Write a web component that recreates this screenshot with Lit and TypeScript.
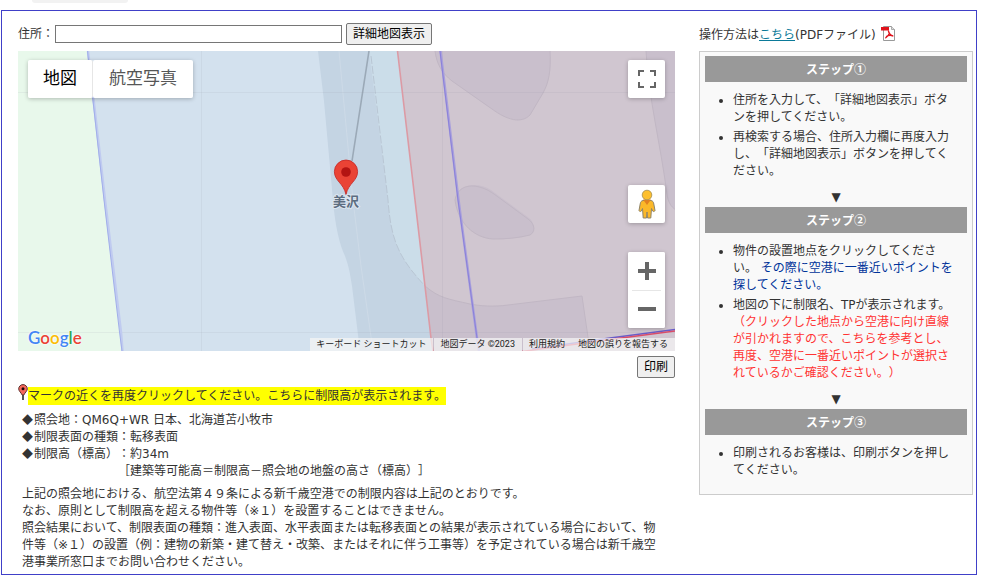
import { LitElement, html, css, svg } from "lit";
import { customElement } from "lit/decorators.js";

const fullscreenIcon = svg`<svg class="icon" viewBox="0 0 18 18" width="18" height="18" aria-hidden="true">
  <path fill="#666" d="M0 0h6v2H2v4H0zM12 0h6v6h-2V2h-4zM0 12h2v4h4v2H0zM16 12h2v6h-6v-2h4z"/></svg>`;

const pegmanIcon = svg`<svg class="icon" viewBox="0 0 18 30" width="18" height="30" aria-hidden="true">
  <path fill="#fbb829" stroke="#8f8468" stroke-width="1" d="M5 11.500C3 12 2.500 13 2.200 15L1 21.500c.4 1.200 1.700 1.200 2.300.6l1.200-2.600.7 9.500h3.300l.5-6 .5 6h3.300l.7-9.500 1.200 2.600c.6.6 1.900.6 2.300-.6L15.800 15c-.3-2-.8-3-2.800-3.500z"/>
  <path fill="#e28020" d="M5 10.500h8L9 16z"/>
  <circle cx="9" cy="6" r="4.800" fill="#fdbf2d" stroke="#a08c50" stroke-width=".8"/></svg>`;

const plusIcon = svg`<svg class="icon" viewBox="0 0 18 18" width="18" height="18" aria-hidden="true">
  <path fill="#666" d="M7 0h4v7h7v4h-7v7H7v-7H0V7h7z"/></svg>`;

const minusIcon = svg`<svg class="icon" viewBox="0 0 18 18" width="18" height="18" aria-hidden="true">
  <path fill="#666" d="M0 7h18v4H0z"/></svg>`;

const pdfIcon = svg`<svg class="pdf" viewBox="0 0 15 16" width="15" height="16" aria-hidden="true">
  <path fill="#fff" stroke="#999" d="M2.500 1.500h8l3 3v11h-11z"/>
  <path fill="#ddd" stroke="#999" stroke-width=".8" d="M10.500 1.500v3h3"/>
  <path fill="#e0131c" d="M0 2h8v3.500H0z"/>
  <path fill="none" stroke="#e0131c" stroke-width="1.300" d="M7.300 5.500c.6 3 2.200 5.300 5 5.500M8.300 8.200c-.6 2.400-2 4-4 5M5 11.800c2-1.500 4.500-1.600 7-.9"/></svg>`;

const smallPin = svg`<svg class="small-pin" viewBox="0 0 10 17" width="10" height="17" aria-hidden="true">
  <path fill="#555" d="M4 8h2v8H4z"/>
  <path fill="#f5675c" stroke="#5a3330" d="M5 .6a4.300 4.300 0 0 0-4.300 4.300C.7 7 3 8.500 4.200 11h1.600C7 8.500 9.300 7 9.300 4.900A4.300 4.300 0 0 0 5 .6z"/>
  <circle cx="5" cy="4.700" r="1.500" fill="#1c0806"/></svg>`;

const mapArt = svg`<svg class="art" viewBox="0 0 657 300" preserveAspectRatio="xMidYMid slice" role="img" aria-label="美沢">
  <rect width="657" height="300" fill="#e8f8eb"/>
  <path fill="#d3e1ee" d="M69 0 86 149 102 281 104 300H657V0z"/>
  <path fill="#c4d4e3" d="M300 0 306 50 315 149C317 175 322 195 327 205 331 216 332 222 334 235L342 300H420L380 0z"/>
  <path fill="#cbdde9" d="M351 0 370 149C373 190 381 207 407 235L397 149 380 0z"/>
  <path fill="#d0c6d0" d="M380 0 397 149 413 287 415 300H657V0z"/>
  <path fill="#c9bfcc" d="M407 235C421 247 430 248 452 253 462 255 476 256 490 254L564 245 572 300H415L413 287z"/>
  <g fill="#c9bfcc" stroke="#c1b7c4">
    <path d="M417 0C419 14 424 22 434 30L472 57 490 64C500 71 507 69 512 64L525 42C531 31 533 20 532 0" stroke="none"/>
    <path d="M417 0C419 14 424 22 434 30L474 58C489 69 503 73 512 64L525 42C531 31 533 20 532 0"/>
    <path d="M437 149C440 133 459 130 473 139L511 167C518 172 516 181 509 184L487 188C462 190 445 179 437 149z" stroke="none"/>
    <path d="M437 149C440 132 459 131 476 143L510 168C518 174 517 181 512 184 500 187 489 188 475 188 457 187 440 173 437 149z"/>
    <path d="M628 0C631 50 642 90 649 143 650 151 653 156 658 159V0"/>
  </g>
  <g fill="none">
    <path stroke="#b9c6d4" stroke-dasharray="8 2" d="M353 5 370 149C373 190 381 207 407 235"/>
    <path stroke="#c1b7c4" d="M407 235C421 247 430 248 452 253 462 255 476 256 490 254L564 245 572 300"/>
    <path stroke="#cddae7" d="M321 0 335 149 343 215 355 300"/>
    <path stroke="#9ba9b7" stroke-width="1.600" d="M351 0 334 110"/>
    <path stroke="#8a8aa0" stroke-opacity=".1" d="M183.500 0V300M424.500 0V300M0 41.500H657M0 281.500H657"/>
    <path stroke="#c0cbf0" stroke-width="2.500" d="M70 0 87 149 103 281 104.500 300"/>
    <path stroke="#a1aeea" d="M69.500 0 86 149 101.500 281 104 300"/>
    <path stroke="#dc9aa4" stroke-width="1.600" d="M379.500 0 397 149 413 287 415 300"/>
    <path stroke="#a9a0dc" stroke-width="2.500" d="M422.500 0 440.500 149 459 287 461 300"/>
    <path stroke="#8a80da" d="M422 0 440 149 459 287"/>
    <path stroke="#6a5cc8" stroke-width="1.500" d="M514 298 592 287 657 278.500"/>
    <path stroke="#da4d69" stroke-width="1.500" d="M504 300.500 592 288.500 657 280"/>
  </g>
  <path fill="#ea4335" stroke="#c5221f" stroke-width=".8" d="M328 109a11.600 11.600 0 0 0-11.600 11.600C316.400 130 325.500 132 328 143.500 330.500 132 339.600 130 339.600 120.600A11.600 11.600 0 0 0 328 109z"/>
  <circle cx="328" cy="121" r="4.800" fill="#b31412"/>
  <text class="place" x="328" y="155" text-anchor="middle">美沢</text>
</svg>`;

@customElement("app-root")
export class AppRoot extends LitElement {
  static styles = css`
    :host {
      display: block;
      overflow: hidden;
      background: #fff;
      color: #333;
      font-family: "DejaVu Sans", "Noto Sans CJK JP", sans-serif;
      font-size: 12px;
      line-height: 17px;
      text-spacing-trim: space-all;
    }
    * { box-sizing: border-box; }
    .tab {
      width: 96px;
      height: 3px;
      margin-left: 32px;
      background: #f2f2f2;
      border-radius: 0 0 16px 16px;
    }
    .frame {
      display: grid;
      grid-template-columns: minmax(0, 1fr) 274px;
      gap: 24px;
      align-items: start;
      margin: 7px 4px 8px 1px;
      padding: 12px 3px 3px 16px;
      border: 1px solid #4040c8;
    }
    .search { display: flex; align-items: center; height: 22px; margin-bottom: 6px; }
    .search label { width: 37px; white-space: nowrap; }
    .search input {
      width: 287px;
      height: 18px;
      padding: 0 2px;
      border: 1px solid #767676;
      font: inherit;
      margin-right: 4px;
    }
    .push {
      height: 22px;
      padding: 0 6px;
      border: 1px solid #767676;
      border-radius: 2px;
      background: #efefef;
      color: #000;
      font: inherit;
      line-height: 20px;
      white-space: nowrap;
    }
    .map { position: relative; height: 300px; overflow: hidden; font-family: Roboto, "Noto Sans CJK JP", sans-serif; }
    .art { display: block; width: 100%; height: 100%; }
    .place { font-size: 13px; font-weight: 700; fill: #5c6d80; stroke: #dce6f0; stroke-width: 2px; paint-order: stroke; }
    .map button { border: 0; margin: 0; padding: 0; background: #fff; font-family: inherit; }
    .types, .tools { position: absolute; top: 9px; }
    .types { left: 10px; display: flex; height: 38px; border-radius: 2px; box-shadow: 0 1px 4px rgba(0, 0, 0, .25); }
    .map .types button { padding: 0 16px 2px; font-size: 17px; line-height: 34px; color: #565656; border-radius: 2px; }
    .map .types button.on { color: #000; padding: 0 15px 2px; border-right: 1px solid #e6e6e6; }
    .tools { right: 10px; bottom: 23px; width: 37px; display: flex; flex-direction: column; }
    .tools button { display: grid; place-items: center; width: 37px; height: 38px; border-radius: 2px; }
    .tools > button, .zoom { box-shadow: 0 1px 4px rgba(0, 0, 0, .25); }
    .map .tools .peg { margin-top: auto; margin-bottom: 29px; }
    .zoom { background: #fff; border-radius: 2px; }
    .zoom hr { position: relative; margin: 0 4px -1px; border: 0; height: 1px; background: #e6e6e6; }
    .icon { display: block; }
    .logo {
      position: absolute;
      left: 10px;
      bottom: 2px;
      font: 600 17px/22px Lato, sans-serif;
      text-decoration: none;
      text-shadow: 0 0 2px #fff, 0 0 2px #fff;
    }
    .b { color: #4285f4; }
    .r { color: #ea4335; }
    .y { color: #fbbc05; }
    .g { color: #34a853; }
    .credits {
      position: absolute;
      right: 0;
      bottom: 0;
      display: flex;
      gap: 1px;
      height: 13px;
      color: #222;
      white-space: nowrap;
    }
    .credits > *, .map .credits > button {
      padding: 0 7px 0 6px;
      background: rgba(245, 245, 245, .72);
      color: inherit;
      font-size: 9px;
      line-height: 13px;
      text-decoration: none;
    }
    .credits > :last-child { margin-left: -1px; }
    .print { display: flex; justify-content: flex-end; margin-top: 5px; }
    .notice { display: flex; align-items: flex-start; height: 21px; margin-top: 6px; }
    .notice mark { margin-top: 3px; background: #ff0; color: inherit; line-height: 18px; }
    .small-pin { flex: none; }
    .result { margin: 7px 8px 0 4px; }
    .result p { margin: 0; }
    .sym { font-family: "Noto Sans CJK JP", sans-serif; font-size: 11px; line-height: 11px; padding-right: 1px; }
    .result .formula { padding-left: 96px; }
    .result .body { margin-top: 6px; }
    .howto { display: flex; align-items: center; height: 22px; margin: 1px 0 5px; }
    .howto a { color: #0b7a99; }
    .pdf { margin: 0 0 5px 5px; }
    .steps { border: 1px solid #ccc; background: #f9f9f9; padding: 4px 5px 8px; }
    h2 {
      margin: 0;
      background: #999;
      color: #fff;
      font: 700 12px/26px "Noto Sans CJK JP", sans-serif;
      text-align: center;
    }
    ul { margin: 10px 0 7px; padding: 0 12px 0 28px; }
    li + li { margin-top: 3px; }
    .next { margin: 0; text-align: center; line-height: 20px; }
    .blue { color: #039; }
    .red { color: #f33; }
  `;

  render() {
    return html`
      <div class="tab"></div>
      <div class="frame">
        <main>
          <div class="search">
            <label for="addr">住所：</label><input id="addr" type="text" />
            <button class="push" type="button">詳細地図表示</button>
          </div>
          <div class="map">
            ${mapArt}
            <div class="types">
              <button class="on" type="button">地図</button><button type="button">航空写真</button>
            </div>
            <div class="tools">
              <button type="button" aria-label="全画面表示">${fullscreenIcon}</button>
              <button class="peg" type="button" aria-label="ストリートビュー">${pegmanIcon}</button>
              <div class="zoom">
                <button type="button" aria-label="拡大">${plusIcon}</button>
                <hr />
                <button type="button" aria-label="縮小">${minusIcon}</button>
              </div>
            </div>
            <a class="logo" href="#"><span class="b">G</span><span class="r">o</span><span class="y">o</span><span class="b">g</span><span class="g">l</span><span class="r">e</span></a>
            <div class="credits">
              <button type="button">キーボード ショートカット</button>
              <span>地図データ ©2023</span>
              <a href="#">利用規約</a>
              <a href="#">地図の誤りを報告する</a>
            </div>
          </div>
          <div class="print"><button class="push" type="button">印刷</button></div>
          <div class="notice">${smallPin}<mark>マークの近くを再度クリックしてください。こちらに制限高が表示されます。</mark></div>
          <div class="result">
            <p><span class="sym">◆</span>照会地：QM6Q+WR 日本、北海道苫小牧市</p>
            <p><span class="sym">◆</span>制限表面の種類：転移表面</p>
            <p><span class="sym">◆</span>制限高（標高）：約34m</p>
            <p class="formula">［建築等可能高＝制限高－照会地の地盤の高さ（標高）］</p>
            <p class="body">上記の照会地における、航空法第４９条による新千歳空港での制限内容は上記のとおりです。<br />なお、原則として制限高を超える物件等（※１）を設置することはできません。<br />照会結果において、制限表面の種類：進入表面、水平表面または転移表面との結果が表示されている場合において、物件等（※１）の設置（例：建物の新築・建て替え・改築、またはそれに伴う工事等）を予定されている場合は新千歳空港事業所窓口までお問い合わせください。</p>
          </div>
        </main>
        <aside>
          <div class="howto">操作方法は<a href="#">こちら</a>(PDFファイル)${pdfIcon}</div>
          <div class="steps">
            <h2>ステップ①</h2>
            <ul>
              <li>住所を入力して、「詳細地図表示」ボタンを押してください。</li>
              <li>再検索する場合、住所入力欄に再度入力し、「詳細地図表示」ボタンを押してください。</li>
            </ul>
            <p class="next">▼</p>
            <h2>ステップ②</h2>
            <ul>
              <li>物件の設置地点をクリックしてください。 <span class="blue">その際に空港に一番近いポイントを探してください。</span></li>
              <li>地図の下に制限名、TPが表示されます。<span class="red">（クリックした地点から空港に向け直線が引かれますので、こちらを参考とし、再度、空港に一番近いポイントが選択されているかご確認ください。）</span></li>
            </ul>
            <p class="next">▼</p>
            <h2>ステップ③</h2>
            <ul>
              <li>印刷されるお客様は、印刷ボタンを押してください。</li>
            </ul>
          </div>
        </aside>
      </div>
    `;
  }
}
